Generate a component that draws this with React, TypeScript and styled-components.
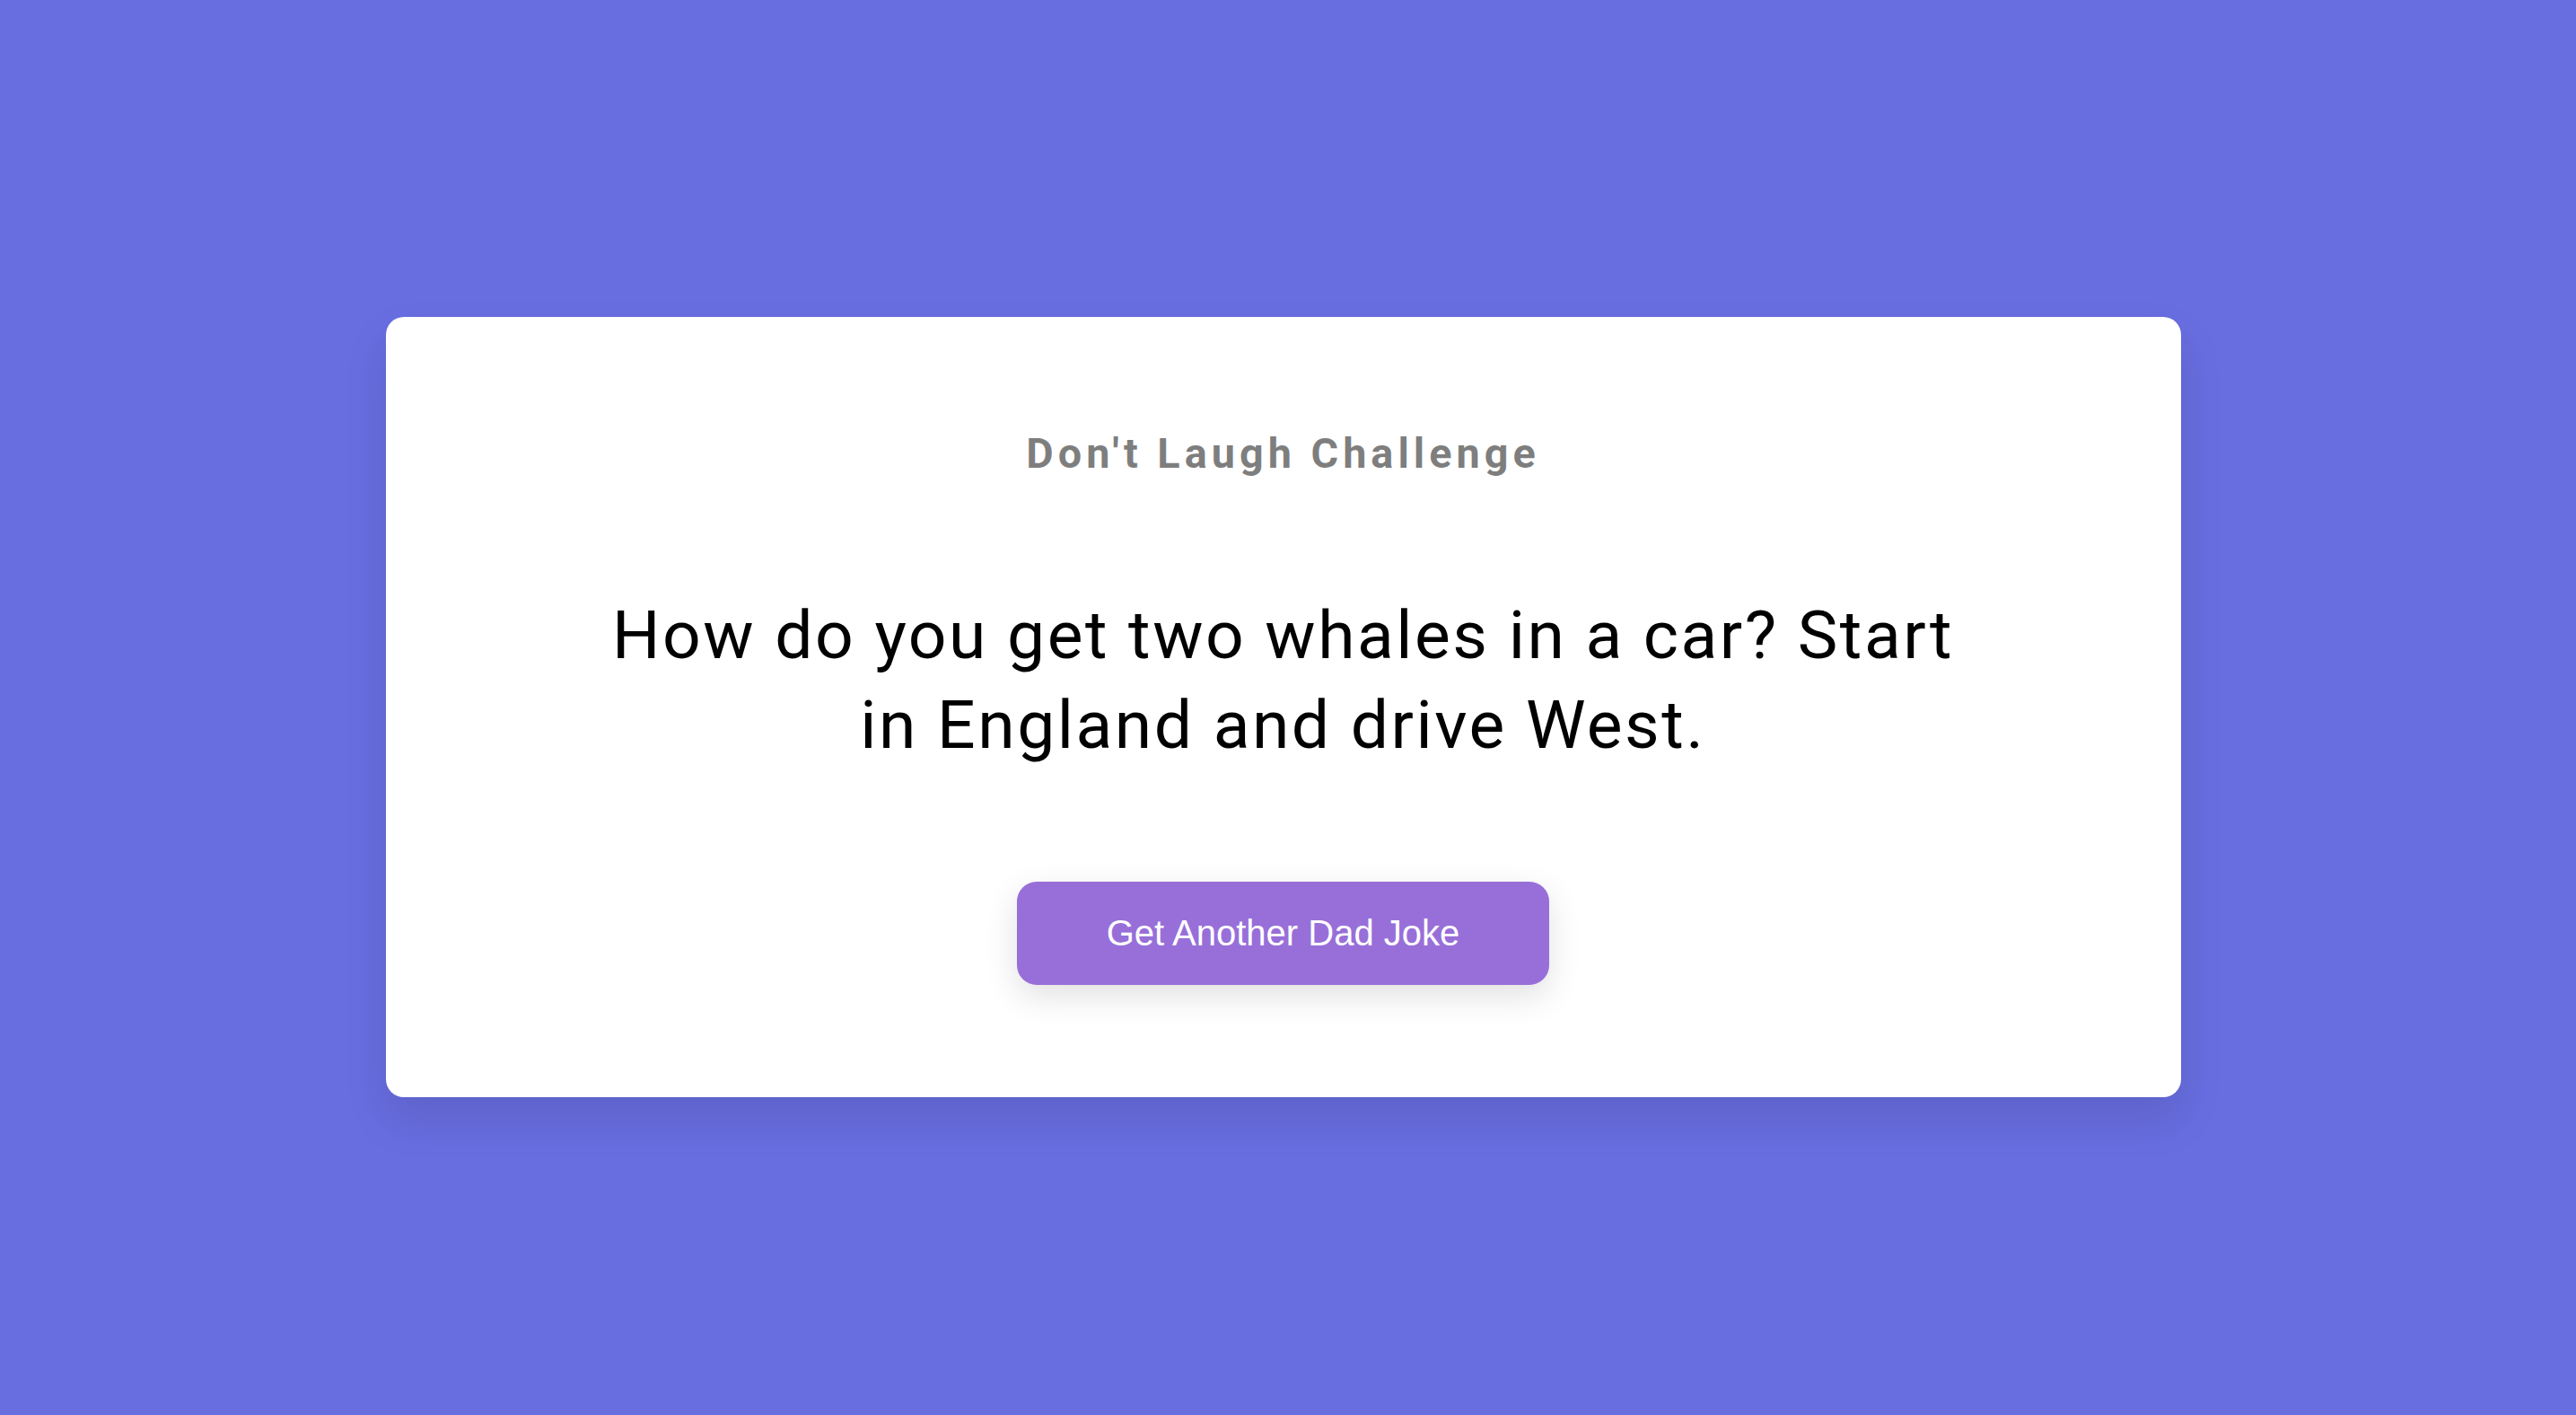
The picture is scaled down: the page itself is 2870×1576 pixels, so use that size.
import React from "react";
import styled, { createGlobalStyle } from "styled-components";

const GlobalStyle = createGlobalStyle`
  * { box-sizing: border-box; }
  html, body { margin: 0; padding: 0; }
  body {
    background: #686de0;
    font-family: Roboto, "Liberation Sans", sans-serif;
  }
`;

const Page = styled.main`
  min-height: 1576px;
  display: flex;
  align-items: center;
  justify-content: center;
  padding: 0 11px 2px 0;
`;

const Card = styled.section`
  width: 2000px;
  background: #ffffff;
  border-radius: 20px;
  box-shadow: 0 25px 50px rgba(0, 0, 0, 0.1);
  padding: 125px 50px;
  text-align: center;
`;

const Title = styled.h3`
  margin: 0;
  font-family: Roboto, sans-serif;
  font-size: 46.8px;
  font-weight: 700;
  letter-spacing: 5px;
  color: #000;
  opacity: 0.5;
`;

const Joke = styled.div`
  margin: 125px auto;
  max-width: 1500px;
  font-family: Roboto, sans-serif;
  font-size: 75px;
  line-height: 100px;
  letter-spacing: 2.5px;
  color: #000;
`;

const JokeButton = styled.button`
  background: #986fd9;
  color: #ffffff;
  border: 0;
  border-radius: 22px;
  box-shadow: 0 12.5px 37.5px rgba(0, 0, 0, 0.12);
  padding: 35px 100px;
  font-family: "Liberation Sans", Arial, sans-serif;
  font-size: 40px;
  cursor: pointer;
`;

export default function App() {
  return (
    <>
      <GlobalStyle />
      <Page>
        <Card>
          <Title>Don't Laugh Challenge</Title>
          <Joke>How do you get two whales in a car? Start in England and drive West.</Joke>
          <JokeButton>Get Another Dad Joke</JokeButton>
        </Card>
      </Page>
    </>
  );
}
